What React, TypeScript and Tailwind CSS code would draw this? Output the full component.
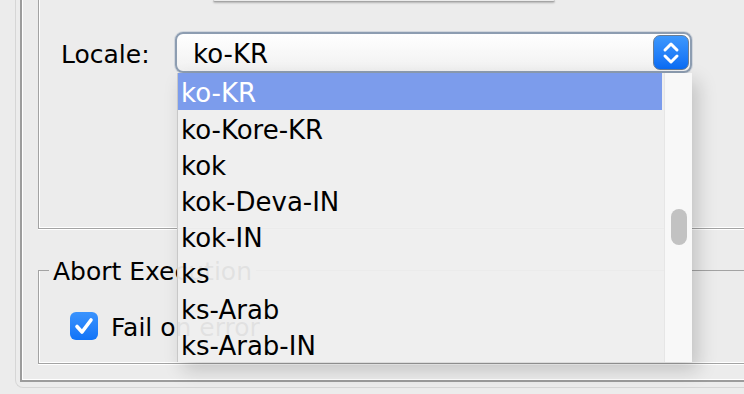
import React from "react";

const items = ["ko-KR", "ko-Kore-KR", "kok", "kok-Deva-IN", "kok-IN", "ks", "ks-Arab", "ks-Arab-IN"];

function Chevrons() {
  return (
    <svg width="18" height="26" viewBox="0 0 18 26" fill="none" stroke="white" strokeWidth="3" strokeLinecap="round" strokeLinejoin="round">
      <path d="M3 10 L9 4 L15 10" />
      <path d="M3 16 L9 22 L15 16" />
    </svg>
  );
}

function Check() {
  return (
    <svg width="20" height="18" viewBox="0 0 20 18" fill="none" stroke="white" strokeWidth="3.6" strokeLinecap="round" strokeLinejoin="round">
      <path d="M3 9.5 L8 15 L17 3" />
    </svg>
  );
}

function LocaleMenu() {
  return (
    <div className="absolute left-[177px] top-[73px] w-[515px] h-[289px] flex bg-[#efefef]/[0.94] border-l border-[#c8c8c8] shadow-[6px_8px_18px_rgba(0,0,0,0.18)] text-[26px]">
      <div className="flex-1 flex flex-col">
        {items.map((it, i) => (
          <div
            key={it}
            className={
              i === 0
                ? "h-[37px] pl-[3px] pt-[3px] flex items-center bg-[#7c9cec] text-white mr-[2px]"
                : "h-[36px] pl-[3px] pt-[3px] flex items-center text-black"
            }
          >
            {it}
          </div>
        ))}
      </div>
      <div className="w-[28px] bg-[#f8f8f8] border-l border-[#e6e6e6] pt-[136px] flex justify-center">
        <div className="w-[16px] h-[36px] rounded-full bg-[#c2c2c2]" />
      </div>
    </div>
  );
}

export default function App() {
  return (
    <div className="relative w-[744px] h-[394px] overflow-hidden bg-[#ececec] text-[25px] leading-none text-black font-['DejaVu_Sans',sans-serif]">
      <div className="ml-[15px] w-[780px] h-[388px] border-l border-b border-[#d6d6d6] rounded-bl-[8px] pl-[4px]">
        <div className="h-[382px] border-l-2 border-b-2 border-[#9c9c9c] shadow-[inset_1px_-1px_0_#ffffff] pl-[16px]">
          {/* Locale group */}
          <div className="h-[229px] border-l border-b border-[#a3a3a3] shadow-[inset_1px_-1px_0_#ffffff,0_1px_0_#ffffff]">
            <div className="ml-[174px] w-[342px] h-[2px] bg-[#ececec] border-b border-[#a5a5a5] rounded-b-[3px] shadow-[0_1px_2px_rgba(0,0,0,0.25)]" />
            <div className="mt-[30px] flex items-center">
              <span className="ml-[22px] w-[114px] pt-[4px]">Locale:</span>
              <div className="w-[517px] h-[41px] rounded-[8px] border-2 border-[#8d9db1] bg-gradient-to-b from-white to-[#f1f1f1] flex items-center justify-between pl-[16px] pr-[1px] shadow-[0_0_0_1px_rgba(160,175,195,0.35)]">
                <span className="pt-[3px] text-[26px]">ko-KR</span>
                <div className="w-[36px] h-[35px] rounded-[7px] border border-[#6a7d94] bg-gradient-to-b from-[#3d98fd] to-[#0a6cf4] flex items-center justify-center">
                  <Chevrons />
                </div>
              </div>
            </div>
          </div>

          {/* Abort Execution group */}
          <div className="mt-[41px] h-[94px] border-l border-b border-[#a3a3a3] shadow-[inset_1px_-1px_0_#ffffff,0_1px_0_#ffffff]">
            <div className="flex items-center h-px">
              <div className="w-[10px] h-px bg-[#a3a3a3]" />
              <span className="px-[4px] pt-[2px]">Abort Execution</span>
              <div className="flex-1 h-px bg-[#a3a3a3]" />
            </div>
            <div className="mt-[41px] ml-[31px] flex items-center gap-[13px]">
              <div className="w-[28px] h-[28px] rounded-[6px] bg-gradient-to-b from-[#3a93fd] to-[#0f73f7] flex items-center justify-center">
                <Check />
              </div>
              <span className="pt-[2px]">Fail on error</span>
            </div>
          </div>
        </div>
      </div>
      <LocaleMenu />
    </div>
  );
}
